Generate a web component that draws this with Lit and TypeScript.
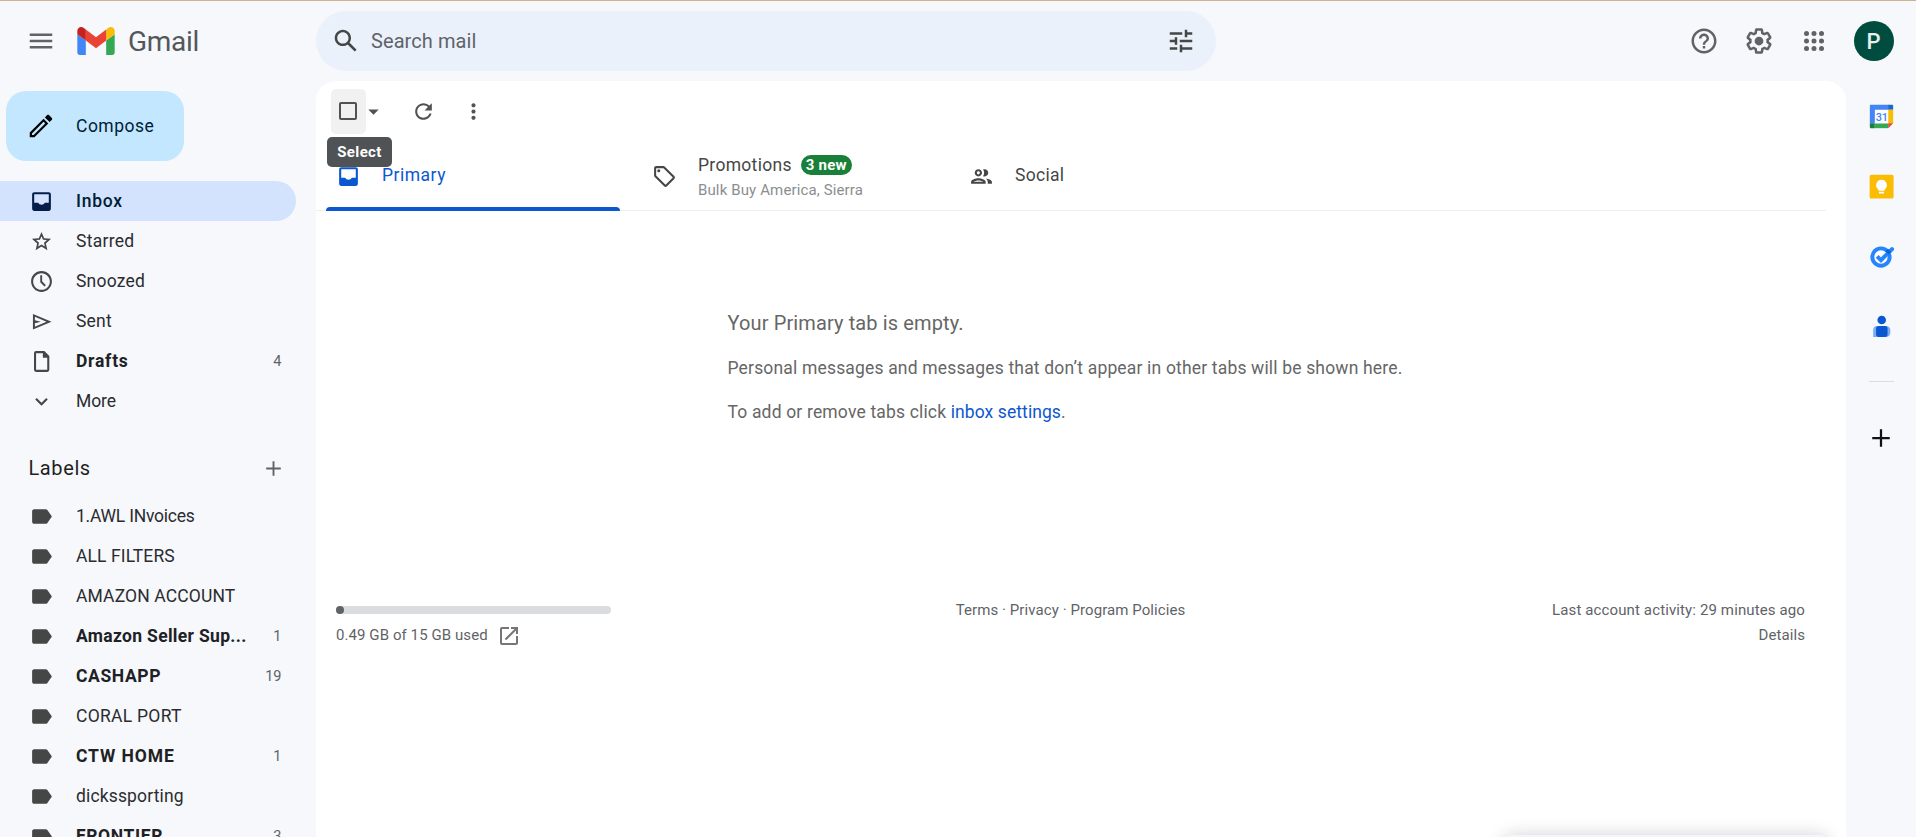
import { LitElement, html, css, svg, nothing } from "lit";
import { customElement, property } from "lit/decorators.js";
import { classMap } from "lit/directives/class-map.js";
import { styleMap } from "lit/directives/style-map.js";

const ICONS: Record<string, string> = {
  menu: "M3 18h18v-2H3v2zm0-5h18v-2H3v2zm0-7v2h18V6H3z",
  pencil:
    "M14.06 8.6l1.34 1.34L6.1 19.2H4.800v-1.300l9.260-9.300M17.66 3c-.25 0-.51.1-.7.29l-1.83 1.83 3.75 3.75 1.83-1.83c.39-.39.39-1.02 0-1.41l-2.34-2.34c-.2-.2-.45-.29-.71-.29zm-3.6 3.19L3 17.25V21h3.75L17.81 9.94l-3.75-3.75z",
  inbox:
    "M19 3H5c-1.1 0-2 .9-2 2v14c0 1.1.9 2 2 2h14c1.1 0 2-.9 2-2V5c0-1.1-.9-2-2-2zM5 5h14v8.2h-3.7a3.9 3.9 0 0 1-6.6 0H5z",
  star: "M22 9.24l-7.19-.62L12 2 9.19 8.63 2 9.24l5.46 4.73L5.82 21 12 17.27 18.18 21l-1.63-7.03L22 9.24zM12 15.1l-3.5 2.1.93-3.98-3.09-2.68 4.08-.35L12 6.4l1.59 3.8 4.08.35-3.09 2.68.93 3.98L12 15.1z",
  clock:
    "M12 2C6.48 2 2 6.48 2 12s4.48 10 10 10 10-4.48 10-10S17.52 2 12 2zm0 18c-4.42 0-8-3.58-8-8s3.58-8 8-8 8 3.58 8 8-3.58 8-8 8zM12.6 6h-1.8v6.6l4 4.2 1.4-1.2-3.6-3.8V6z",
  send: "M3 20V4l19 8-19 8zm2-3l11.85-5L5 7v3.5l6 1.5-6 1.5V17z",
  draft:
    "M6.8 2h8l4.7 4.7V20a2 2 0 0 1-2 2H6.8a2 2 0 0 1-2-2V4a2 2 0 0 1 2-2zM6.8 4v16h10.7V8.3h-4.2V4z",
  chevron: "M7.41 8.59L12 13.17l4.59-4.58L18 10l-6 6-6-6z",
  label:
    "M17.63 5.84C17.27 5.33 16.67 5 16 5L5 5.01C3.9 5.01 3 5.9 3 7v10c0 1.1.9 1.99 2 1.99L16 19c.67 0 1.27-.33 1.63-.84L22 12l-4.37-6.16z",
  plus: "M19 12.9h-6.1V19h-1.8v-6.1H5v-1.8h6.1V5h1.8v6.1H19z",
  search:
    "M20.49 19l-5.73-5.73C15.53 12.2 16 10.91 16 9.5 16 5.91 13.09 3 9.5 3S3 5.91 3 9.5 5.91 16 9.5 16c1.41 0 2.7-.47 3.77-1.24L19 20.49 20.49 19zM5 9.5C5 7.01 7.01 5 9.5 5S14 7.01 14 9.5 11.99 14 9.5 14 5 11.99 5 9.5z",
  tune: "M3 17v2h6v-2H3zM3 5v2h10V5H3zm10 16v-2h8v-2h-8v-2h-2v6h2zM7 9v2H3v2h4v2h2V9H7zm14 4v-2H11v2h10zm-6-4h2V7h4V5h-4V3h-2v6z",
  box: "M19 5v14H5V5h14m0-2H5c-1.1 0-2 .9-2 2v14c0 1.1.9 2 2 2h14c1.1 0 2-.9 2-2V5c0-1.1-.9-2-2-2z",
  caret: "M7 10l5 5 5-5z",
  refresh:
    "M17.65 6.35C16.2 4.9 14.21 4 12 4c-4.42 0-7.99 3.58-7.99 8s3.57 8 7.99 8c3.73 0 6.84-2.55 7.73-6h-2.08c-.82 2.33-3.04 4-5.65 4-3.31 0-6-2.69-6-6s2.69-6 6-6c1.66 0 3.14.69 4.22 1.78L13 11h7V4l-2.35 2.35z",
  dots: "M12 8c1.1 0 2-.9 2-2s-.9-2-2-2-2 .9-2 2 .9 2 2 2zm0 2c-1.1 0-2 .9-2 2s.9 2 2 2 2-.9 2-2-.9-2-2-2zm0 6c-1.1 0-2 .9-2 2s.9 2 2 2 2-.9 2-2-.9-2-2-2z",
  tag: "M21.41 11.58l-9-9C12.05 2.22 11.55 2 11 2H4c-1.1 0-2 .9-2 2v7c0 .55.22 1.05.59 1.42l9 9c.36.36.86.58 1.41.58s1.05-.22 1.41-.59l7-7c.37-.36.59-.86.59-1.41s-.23-1.06-.59-1.42zM13 20.01L4 11V4h7v-.01l9 9-7 7.02zM6.5 5a1.5 1.5 0 1 0 0 3 1.5 1.5 0 0 0 0-3z",
  people:
    "M9 13.75c-2.34 0-7 1.17-7 3.5V19h14v-1.75c0-2.33-4.66-3.5-7-3.5zM4.34 17c.84-.58 2.87-1.25 4.66-1.25s3.82.67 4.66 1.25H4.34zM9 12c1.93 0 3.5-1.57 3.5-3.5S10.93 5 9 5 5.5 6.57 5.5 8.5 7.07 12 9 12zm0-5c.83 0 1.5.67 1.5 1.5S9.83 10 9 10s-1.5-.67-1.5-1.5S8.17 7 9 7zm7.04 6.81c1.16.84 1.96 1.96 1.96 3.44V19h4v-1.75c0-2.02-3.5-3.17-5.96-3.44zM15 12c1.93 0 3.5-1.57 3.5-3.5S16.93 5 15 5c-.54 0-1.04.13-1.5.35.63.89 1 1.98 1 3.15s-.37 2.26-1 3.15c.46.22.96.35 1.5.35z",
  open: "M19 19H5V5h7V3H5c-1.11 0-2 .9-2 2v14c0 1.1.89 2 2 2h14c1.1 0 2-.9 2-2v-7h-2v7zM14 3v2h3.59l-9.83 9.83 1.41 1.41L19 6.41V10h2V3h-7z",
  help: "M11 18h2v-2h-2v2zm1-16C6.48 2 2 6.48 2 12s4.48 10 10 10 10-4.48 10-10S17.52 2 12 2zm0 18c-4.41 0-8-3.59-8-8s3.59-8 8-8 8 3.59 8 8-3.59 8-8 8zm0-14c-2.21 0-4 1.79-4 4h2c0-1.1.9-2 2-2s2 .9 2 2c0 2-3 1.75-3 5h2c0-2.25 3-2.5 3-5 0-2.21-1.79-4-4-4z",
  gear: "M13.85 22.25h-3.7c-.74 0-1.36-.54-1.45-1.27l-.27-1.89c-.27-.14-.53-.29-.79-.46l-1.8.72c-.7.26-1.47-.03-1.81-.65L2.2 15.53c-.35-.66-.2-1.44.36-1.88l1.53-1.19c-.01-.15-.02-.3-.02-.46 0-.15.01-.31.02-.46l-1.52-1.19c-.59-.45-.74-1.26-.37-1.88l1.85-3.19c.34-.62 1.11-.9 1.79-.63l1.81.73c.26-.17.52-.32.78-.46l.27-1.91c.09-.7.71-1.25 1.44-1.25h3.7c.74 0 1.36.54 1.45 1.27l.27 1.89c.27.14.53.29.79.46l1.8-.72c.71-.26 1.48.03 1.82.65l1.84 3.18c.36.66.2 1.44-.36 1.88l-1.52 1.19c.01.15.02.3.02.46s-.01.31-.02.46l1.52 1.19c.56.45.72 1.23.37 1.86l-1.86 3.22c-.34.62-1.11.9-1.8.63l-1.8-.72c-.26.17-.52.32-.78.46l-.27 1.91c-.1.68-.72 1.22-1.46 1.22zm-3.23-2h2.76l.37-2.55.53-.22c.44-.18.88-.44 1.34-.78l.45-.34 2.38.96 1.38-2.4-2.03-1.58.07-.56c.03-.26.06-.51.06-.78s-.03-.53-.06-.78l-.07-.56 2.03-1.58-1.39-2.4-2.39.96-.45-.35c-.42-.32-.87-.58-1.33-.77l-.52-.22-.37-2.55h-2.76l-.37 2.55-.53.21c-.44.19-.88.44-1.34.79l-.45.33-2.38-.95-1.39 2.39 2.03 1.58-.07.56a7 7 0 0 0-.06.79c0 .26.02.53.06.78l.07.56-2.03 1.58 1.38 2.4 2.39-.96.45.35c.43.33.86.58 1.33.77l.53.22.38 2.55zM12 8.5a3.5 3.5 0 1 1 0 7 3.5 3.5 0 0 1 0-7z",
};

@customElement("ui-icon")
class UiIcon extends LitElement {
  @property() name = "";
  @property({ type: Number }) size = 25;
  static styles = css`
    :host { display: inline-flex; flex: none; }
    svg { display: block; fill: currentColor; }
  `;
  render() {
    const body =
      this.name === "apps"
        ? [6, 12, 18].flatMap((y) => [6, 12, 18].map((x) => svg`<circle cx=${x} cy=${y} r="2"/>`))
        : svg`<path fill-rule="evenodd" d=${ICONS[this.name] ?? ""}/>`;
    return html`<svg width=${this.size} height=${this.size} viewBox="0 0 24 24">${body}</svg>`;
  }
}

interface Row {
  icon: string;
  text: string;
  track: number;
  count?: string;
  bold?: boolean;
  active?: boolean;
  size?: number;
}

const FOLDERS: Row[] = [
  { icon: "inbox", text: "Inbox", track: 0.75, active: true },
  { icon: "star", text: "Starred", track: 0.28, size: 23 },
  { icon: "clock", text: "Snoozed", track: 0.2 },
  { icon: "send", text: "Sent", track: 0.2, size: 23.5 },
  { icon: "draft", text: "Drafts", track: 0.75, count: "4", bold: true },
  { icon: "chevron", text: "More", track: -0.1 },
];

const LABELS: Row[] = [
  { icon: "label", text: "1.AWL INvoices", track: -0.24 },
  { icon: "label", text: "ALL FILTERS", track: 0.1 },
  { icon: "label", text: "AMAZON ACCOUNT", track: 0.13 },
  { icon: "label", text: "Amazon Seller Sup...", track: 0.32, count: "1", bold: true },
  { icon: "label", text: "CASHAPP", track: 0.62, count: "19", bold: true },
  { icon: "label", text: "CORAL PORT", track: 0.27 },
  { icon: "label", text: "CTW HOME", track: 0.9, count: "1", bold: true },
  { icon: "label", text: "dickssporting", track: 0.15 },
  { icon: "label", text: "FRONTIER", track: 0.65, count: "3", bold: true },
];

@customElement("app-root")
class AppRoot extends LitElement {
  static styles = css`
    :host {
      display: flex;
      flex-direction: column;
      box-sizing: border-box;
      height: 100vh;
      overflow: hidden;
      position: relative;
      background: #f6f8fc;
      border-top: 1px solid #cdb491;
      font-family: Roboto, "Liberation Sans", sans-serif;
      font-size: 17.5px;
      color: #2b2c2f;
    }
    .header { display: grid; grid-template-columns: 316px 900px 1fr; height: 80px; flex: none; align-items: center; }
    .brand { display: flex; align-items: center; padding-left: 26px; color: #5f6368; }
    .logo { margin-left: 21px; display: block; }
    .brand-name { font-size: 28px; letter-spacing: -0.3px; margin-left: 13px; color: #54575a; line-height: 32px; padding-top: 2px; }
    .search { display: flex; align-items: center; height: 60px; border-radius: 30px; background: #eaf1fb; padding: 0 20px 0 15px; box-sizing: border-box; color: #444746; }
    .search-text { flex: 1; font-size: 20px; letter-spacing: 0.08px; margin-left: 10px; color: #5f6368; }
    .actions { display: flex; align-items: center; justify-content: flex-end; gap: 25px; padding-right: 22px; color: #5f6368; }
    .avatar { width: 40px; height: 40px; border-radius: 50%; background: #004d40; color: #e4f1ee; font-size: 22px; font-weight: 500; line-height: 40px; text-align: center; box-sizing: border-box; padding: 1px 1px 0 0; }

    .body { display: grid; grid-template-columns: 316px 1fr 70px; flex: 1; min-height: 0; }
    .side { overflow: hidden; }
    .compose { display: flex; align-items: center; width: 178px; height: 70px; margin: 10px 0 20px 6px; padding-left: 20px; box-sizing: border-box; border-radius: 20px; background: #c2e7ff; color: #001d35; gap: 20px; letter-spacing: 0.5px; font-weight: 450; }
    .compose ui-icon { color: #000; }
    .row { display: flex; align-items: center; width: 296px; height: 40px; box-sizing: border-box; padding-right: 15px; border-radius: 0 20px 20px 0; }
    .slot { width: 25px; margin: 1px 10px 0 29px; display: flex; justify-content: center; color: #444746; }
    .row-text { flex: 1; padding-left: 12px; white-space: nowrap; }
    .count { font-size: 14.5px; letter-spacing: -0.3px; color: #5f6368; }
    .bold .row-text { font-weight: 700; color: #202124; }
    .active { background: #d3e3fd; color: #001d35; }
    .active .row-text { font-weight: 500; }
    .active .slot { color: #041e49; }
    .labels-head { display: flex; align-items: center; justify-content: space-between; height: 56px; padding: 19px 30px 0 28.5px; color: #1f1f1f; font-size: 20px; letter-spacing: 0.6px; }
    .labels-head ui-icon { color: #5f6368; }

    .main { background: #fff; border-radius: 20px 20px 0 0; overflow: hidden; display: flex; flex-direction: column; }
    .toolbar { display: flex; align-items: center; height: 60px; flex: none; padding-left: 15px; color: #505352; box-sizing: border-box; }
    .check { position: relative; width: 35px; height: 45px; box-sizing: border-box; padding-right: 1px; border-radius: 5px; background: #f1f1f1; display: flex; align-items: center; justify-content: center; }
    .tip { position: absolute; z-index: 2; top: 48px; left: -4px; width: 65px; height: 30px; border-radius: 5px; background: #505356; color: #fff; font-size: 15px; font-weight: 700; letter-spacing: 0.37px; display: flex; align-items: center; justify-content: center; }
    .caret { width: 15px; display: flex; justify-content: center; }
    .refresh { margin-left: 30px; }
    .kebab { margin-left: 25px; }
    .tabs { display: flex; height: 70px; flex: none; box-sizing: border-box; padding-left: 10px; gap: 22px; margin-right: 20px; box-shadow: inset 0 -1px #eceff1; }
    .tab { width: 294px; box-sizing: border-box; display: flex; align-items: center; padding-left: 10px; gap: 21px; font-weight: 450; color: #444746; }
    .tab.on { color: #0b57d0; position: relative; }
    .bar { position: absolute; left: 0; right: 0; bottom: 0; height: 4px; border-radius: 4px 4px 0 0; background: #0b57d0; }
    .tab-text { letter-spacing: 0.3px; padding-bottom: 2px; }
    .tab-text.on { letter-spacing: 0.5px; }
    .social { padding-left: 11px; }
    .promo { padding-top: 2px; }
    .promo-top { display: flex; align-items: center; gap: 9px; height: 22px; letter-spacing: 0.3px; }
    .badge { background: #188038; color: #fff; font-size: 15px; font-weight: 700; letter-spacing: 0.2px; height: 20px; width: 51px; border-radius: 10px; display: flex; align-items: center; justify-content: center; }
    .sub { font-size: 15px; font-weight: 400; color: #8b8e91; letter-spacing: 0.13px; line-height: 20px; padding-top: 4px; }
    .empty { height: 387px; box-sizing: border-box; padding: 100px 0 0 411.5px; color: #666; flex: none; }
    .line { line-height: 24px; padding-bottom: 20px; letter-spacing: 0.17px; }
    .line.big { font-size: 20px; letter-spacing: 0.12px; padding-bottom: 21px; }
    .link { color: #0b57d0; letter-spacing: 0.08px; }
    .foot { display: grid; grid-template-columns: 275px 1fr 275px; padding: 0 41px 0 20px; font-size: 15px; line-height: 25px; color: #5f6368; letter-spacing: 0.08px; }
    .track { height: 8px; border-radius: 4px; background: #dadce0; margin: 8px 0 9px; display: flex; }
    .used { border-radius: 4px; background: #5f6368; min-width: 8px; }
    .usage { display: flex; align-items: center; gap: 9px; }
    .usage ui-icon { color: #747678; }
    .policies { text-align: center; }
    .activity { text-align: right; white-space: nowrap; }
    .activity .first { letter-spacing: 0.12px; }

    .rail { display: flex; flex-direction: column; align-items: center; padding-top: 23px; gap: 45px; }
    .rail svg { display: block; flex: none; }
    .rule { width: 25px; height: 1px; background: #dcdde0; margin-top: -3px; }
    .rail ui-icon { color: #111; margin-top: -4px; }
    .toast { position: absolute; left: 1504px; top: 834px; width: 324px; height: 40px; border-radius: 8px; background: #f2f6fc; box-shadow: 0 0 18px rgba(0, 0, 0, 0.18); }
  `;

  private row(r: Row) {
    return html`<div class=${classMap({ row: true, bold: !!r.bold, active: !!r.active })}>
      <span class="slot"><ui-icon name=${r.icon} size=${r.size ?? 25}></ui-icon></span>
      <span class="row-text" style=${styleMap({ letterSpacing: `${r.track}px` })}>${r.text}</span>
      ${r.count ? html`<span class="count">${r.count}</span>` : nothing}
    </div>`;
  }

  render() {
    const used = (0.49 / 15) * 100;
    return html`
      <header class="header">
        <div class="brand">
          <ui-icon name="menu" size="30"></ui-icon>
          <svg class="logo" width="38" height="28" viewBox="52 42 88 66">
            <path fill="#4285f4" d="M58 108h14V74L52 59v43c0 3.32 2.69 6 6 6" />
            <path fill="#34a853" d="M120 108h14c3.32 0 6-2.69 6-6V59l-20 15" />
            <path fill="#fbbc04" d="M120 48v26l20-15v-8c0-7.42-8.47-11.65-14.4-7.2" />
            <path fill="#ea4335" d="M72 74V48l24 18 24-18v26L96 92" />
            <path fill="#c5221f" d="M52 51v8l20 15V48l-5.6-4.2c-5.94-4.45-14.4-.22-14.4 7.2" />
          </svg>
          <span class="brand-name">Gmail</span>
        </div>
        <div class="search">
          <ui-icon name="search" size="30"></ui-icon>
          <span class="search-text">Search mail</span>
          <ui-icon name="tune" size="30"></ui-icon>
        </div>
        <div class="actions">
          <ui-icon name="help" size="30"></ui-icon>
          <ui-icon name="gear" size="30"></ui-icon>
          <ui-icon name="apps" size="30"></ui-icon>
          <span class="avatar">P</span>
        </div>
      </header>
      <div class="body">
        <nav class="side">
          <div class="compose"><ui-icon name="pencil" size="30"></ui-icon><span>Compose</span></div>
          ${FOLDERS.map((r) => this.row(r))}
          <div class="labels-head"><span>Labels</span><ui-icon name="plus" size="25"></ui-icon></div>
          ${LABELS.map((r) => this.row(r))}
        </nav>
        <main class="main">
          <div class="toolbar">
            <span class="check"><ui-icon name="box" size="24"></ui-icon><span class="tip">Select</span></span>
            <span class="caret"><ui-icon name="caret"></ui-icon></span>
            <ui-icon class="refresh" name="refresh"></ui-icon>
            <ui-icon class="kebab" name="dots"></ui-icon>
          </div>
          <div class="tabs">
            <div class="tab on"><ui-icon name="inbox" size="25"></ui-icon><span class="tab-text on">Primary</span><span class="bar"></span></div>
            <div class="tab">
              <ui-icon name="tag"></ui-icon>
              <div class="promo">
                <div class="promo-top"><span>Promotions</span><span class="badge">3 new</span></div>
                <div class="sub">Bulk Buy America, Sierra</div>
              </div>
            </div>
            <div class="tab social"><ui-icon name="people"></ui-icon><span class="tab-text">Social</span></div>
          </div>
          <div class="empty">
            <div class="line big">Your Primary tab is empty.</div>
            <div class="line">Personal messages and messages that don’t appear in other tabs will be shown here.</div>
            <div class="line">To add or remove tabs click <span class="link">inbox settings</span>.</div>
          </div>
          <div class="foot">
            <div>
              <div class="track"><span class="used" style=${styleMap({ width: `${used * 0.8}%` })}></span></div>
              <div class="usage"><span>0.49 GB of 15 GB used</span><ui-icon name="open" size="24"></ui-icon></div>
            </div>
            <div class="policies">Terms · Privacy · Program Policies</div>
            <div class="activity"><div class="first">Last account activity: 29 minutes ago</div><div>Details</div></div>
          </div>
        </main>
        <aside class="rail">
          <svg width="25" height="25" viewBox="0 0 24 24">
            <path fill="#fff" d="M5 5h14v14H5z" />
            <path fill="#4285f4" d="M2 .8h17V5.5H5.6V19H.8V2C.8 1.3 1.3 .8 2 .8z" />
            <path fill="#1967d2" d="M18.5 .8H22c.7 0 1.2 .5 1.2 1.2v3.5h-4.7z" />
            <path fill="#fbbc04" d="M18.5 5.5h4.7v13h-4.7z" />
            <path fill="#34a853" d="M5.5 18.7h13v4.5h-13z" />
            <path fill="#188038" d="M.8 18.7h4.7v4.5H2c-.7 0-1.2-.5-1.2-1.2z" />
            <path fill="#ea4335" d="M18.5 18.5h4.7l-4.7 4.7z" />
            <text x="12.2" y="16" text-anchor="middle" font-family="Roboto" font-weight="500" font-size="10.5" letter-spacing="-.3" fill="#4285f4">31</text>
          </svg>
          <svg width="25" height="25" viewBox="0 0 24 24">
            <rect x=".6" y=".6" width="23" height="23" rx="1.6" fill="#fbbc04" />
            <path fill="#fff" d="M12 5.5a5.2 5.2 0 0 0-3 9.4V16h6v-1.1a5.2 5.2 0 0 0-3-9.4zM9.5 17h5v1.7h-5z" />
          </svg>
          <svg width="25" height="25" viewBox="0 0 24 24">
            <circle cx="11.5" cy="12.5" r="8.3" fill="#fff" stroke="#2684fc" stroke-width="3.8" />
            <path d="M7.8 11.8l3.7 3.7 8.6-8.6" fill="none" stroke="#2684fc" stroke-width="3.8" />
            <path d="M19.2 7.8l2.9-2.9" fill="none" stroke="#2684fc" stroke-width="4" stroke-linecap="round" />
            <path d="M15.9 6.9l2.3-2.3 3 3-2.4 2.4z" fill="#0066da" />
          </svg>
          <svg width="25" height="25" viewBox="0 0 24 24">
            <path fill="#7baaf7" d="M7 11.500h9.5a4 4 0 0 1 4 4V18a4 4 0 0 1-4 4H4v-6.5a4 4 0 0 1 3-4z" />
            <rect x="6.8" y="11.5" width="11" height="10.5" rx="2.5" fill="#0b57d0" />
            <circle cx="12.2" cy="5.8" r="4.1" fill="#0b57d0" />
          </svg>
          <span class="rule"></span>
          <ui-icon name="plus" size="30"></ui-icon>
        </aside>
      </div>
      <div class="toast"></div>
    `;
  }
}
